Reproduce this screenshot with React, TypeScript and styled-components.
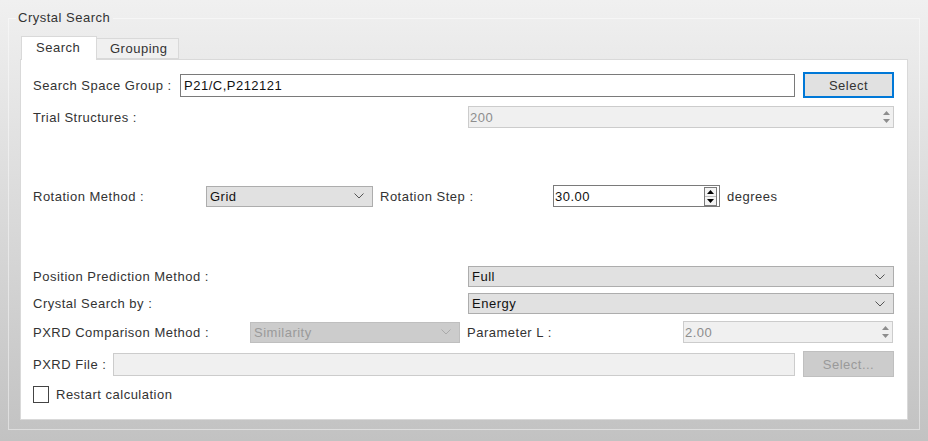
import * as React from "react";
import styled, { createGlobalStyle } from "styled-components";

const GlobalStyle = createGlobalStyle`
  html, body {
    margin: 0;
    padding: 0;
  }
  body {
    width: 928px;
    height: 441px;
    overflow: hidden;
    background: linear-gradient(#f0f0f0, #c2c2c2);
    font-family: "Liberation Sans", Arial, sans-serif;
    font-size: 13px;
    letter-spacing: 0.5px;
    color: #333;
  }
`;

const Root = styled.div`
  padding: 10px 8px 0 8px;
`;

const GroupBox = styled.fieldset`
  margin: 0;
  width: 912px;
  height: 420px;
  box-sizing: border-box;
  border: 1px solid rgba(255, 255, 255, 0.45);
  padding: 10px 11px 9px 11px;
  display: flex;
  flex-direction: column;
`;

const GroupTitle = styled.legend`
  margin-left: -4px;
  padding: 0 3px 0 2px;
  line-height: 16px;
`;

const TabBar = styled.div`
  display: flex;
  align-items: flex-end;
  height: 23px;
  position: relative;
  z-index: 1;
`;

const Tab = styled.div<{ $active?: boolean }>`
  box-sizing: border-box;
  width: ${(p) => (p.$active ? 76 : 82)}px;
  height: ${(p) => (p.$active ? 24 : 21)}px;
  margin-bottom: ${(p) => (p.$active ? -1 : 0)}px;
  margin-left: ${(p) => (p.$active ? 1 : 0)}px;
  border: 1px solid #d9d9d9;
  border-bottom: ${(p) => (p.$active ? "none" : "1px solid #d9d9d9")};
  border-left: ${(p) => (p.$active ? "1px solid #d9d9d9" : "none")};
  background: ${(p) => (p.$active ? "#fff" : "#f0f0f0")};
  display: flex;
  align-items: center;
  padding-left: ${(p) => (p.$active ? 14 : 13)}px;
  padding-bottom: ${(p) => (p.$active ? 2 : 0)}px;
`;

const Panel = styled.div`
  flex: 1;
  background: #fff;
  border: 1px solid #d9d9d9;
  padding: 12px 13px 0 12px;
  display: flex;
  flex-direction: column;
`;

const Row = styled.div<{ $h: number; $top: number }>`
  display: flex;
  align-items: center;
  height: ${(p) => p.$h}px;
  margin-top: ${(p) => p.$top}px;
`;

const Label = styled.span<{ $w?: number; $gap?: number }>`
  white-space: nowrap;
  ${(p) => (p.$w ? `width: ${p.$w}px; flex: none;` : "flex: 1;")}
  margin-left: ${(p) => p.$gap ?? 0}px;
`;

const TextInput = styled.div<{ $disabled?: boolean }>`
  flex: 1;
  height: 23px;
  box-sizing: border-box;
  border: 1px solid ${(p) => (p.$disabled ? "#cccccc" : "#7a7a7a")};
  background: ${(p) => (p.$disabled ? "#f0f0f0" : "#fff")};
  display: flex;
  align-items: center;
  padding-left: 3px;
  color: #111;
`;

const Button = styled.div<{ $disabled?: boolean; $focus?: boolean }>`
  width: 91px;
  height: 26px;
  margin-left: 8px;
  box-sizing: border-box;
  border: ${(p) =>
    p.$focus ? "2px solid #0078d7" : p.$disabled ? "1px solid #bfbfbf" : "1px solid #adadad"};
  background: ${(p) => (p.$disabled ? "#cccccc" : "#e1e1e1")};
  color: ${(p) => (p.$disabled ? "#9a9a9a" : "#333")};
  display: flex;
  align-items: center;
  justify-content: center;
`;

const Combo = styled.div<{ $w: number; $disabled?: boolean }>`
  width: ${(p) => p.$w}px;
  flex: none;
  height: 21px;
  box-sizing: border-box;
  border: 1px solid ${(p) => (p.$disabled ? "#bfbfbf" : "#adadad")};
  background: ${(p) => (p.$disabled ? "#cccccc" : "#e1e1e1")};
  color: ${(p) => (p.$disabled ? "#9a9a9a" : "#111")};
  display: flex;
  align-items: center;
  justify-content: space-between;
  padding: 0 8px 0 3px;
`;

const Spin = styled.div<{ $w: number; $disabled?: boolean }>`
  width: ${(p) => p.$w}px;
  flex: none;
  height: 22px;
  box-sizing: border-box;
  border: 1px solid ${(p) => (p.$disabled ? "#cccccc" : "#7a7a7a")};
  background: ${(p) => (p.$disabled ? "#f0f0f0" : "#fff")};
  color: ${(p) => (p.$disabled ? "#8d8d8d" : "#111")};
  display: flex;
  align-items: center;
  justify-content: space-between;
  padding: 0 2px 0 1px;
`;

const Unit = styled.span`
  margin-left: 7px;
`;

const CheckRow = styled.label`
  display: flex;
  align-items: center;
`;

const CheckBox = styled.span`
  width: 14px;
  height: 15px;
  border: 1px solid #444;
  background: #fff;
  margin-right: 7px;
`;

const Chevron = ({ disabled }: { disabled?: boolean }) => (
  <svg width="10" height="6" viewBox="0 0 10 6">
    <path d="M0.5 0.5 L5 5 L9.5 0.5" fill="none" stroke={disabled ? "#aaa" : "#555"} strokeWidth="1" />
  </svg>
);

const SpinArrows = ({ disabled }: { disabled?: boolean }) =>
  disabled ? (
    <svg width="9" height="16" viewBox="0 0 9 16">
      <path d="M1 6 L4.5 2 L8 6 Z" fill="#8d8d8d" />
      <path d="M1 10 L4.5 14 L8 10 Z" fill="#8d8d8d" />
    </svg>
  ) : (
    <svg width="13" height="19" viewBox="0 0 13 19">
      <rect x="0.5" y="0.5" width="12" height="18" fill="#f4f4f4" stroke="#7a7a7a" />
      <line x1="1" y1="9.5" x2="12" y2="9.5" stroke="#bbb" />
      <path d="M3 7 L6.5 3 L10 7 Z" fill="#000" />
      <path d="M3 12 L6.5 16 L10 12 Z" fill="#000" />
    </svg>
  );

export default function App() {
  return (
    <>
      <GlobalStyle />
      <Root>
        <GroupBox>
          <GroupTitle>Crystal Search</GroupTitle>
          <TabBar>
            <Tab $active>Search</Tab>
            <Tab>Grouping</Tab>
          </TabBar>
          <Panel>
            <Row $h={26} $top={0}>
              <Label $w={147}>Search Space Group :</Label>
              <TextInput>P21/C,P212121</TextInput>
              <Button $focus>Select</Button>
            </Row>
            <Row $h={22} $top={8}>
              <Label>Trial Structures :</Label>
              <Spin $w={426} $disabled>
                <span>200</span>
                <SpinArrows disabled />
              </Spin>
            </Row>
            <Row $h={22} $top={57}>
              <Label $w={173}>Rotation Method :</Label>
              <Combo $w={167}>
                <span>Grid</span>
                <Chevron />
              </Combo>
              <Label $w={173} $gap={7}>Rotation Step :</Label>
              <Spin $w={167}>
                <span>30.00</span>
                <SpinArrows />
              </Spin>
              <Unit>degrees</Unit>
            </Row>
            <Row $h={21} $top={59}>
              <Label>Position Prediction Method :</Label>
              <Combo $w={426}>
                <span>Full</span>
                <Chevron />
              </Combo>
            </Row>
            <Row $h={21} $top={6}>
              <Label>Crystal Search by :</Label>
              <Combo $w={426}>
                <span>Energy</span>
                <Chevron />
              </Combo>
            </Row>
            <Row $h={22} $top={7}>
              <Label $w={217}>PXRD Comparison Method :</Label>
              <Combo $w={210} $disabled>
                <span>Similarity</span>
                <Chevron disabled />
              </Combo>
              <Label $w={216} $gap={7}>Parameter L :</Label>
              <Spin $w={210} $disabled>
                <span>2.00</span>
                <SpinArrows disabled />
              </Spin>
            </Row>
            <Row $h={26} $top={8}>
              <Label $w={80}>PXRD File :</Label>
              <TextInput $disabled />
              <Button $disabled>Select...</Button>
            </Row>
            <Row $h={18} $top={8}>
              <CheckRow>
                <CheckBox />
                Restart calculation
              </CheckRow>
            </Row>
          </Panel>
        </GroupBox>
      </Root>
    </>
  );
}
